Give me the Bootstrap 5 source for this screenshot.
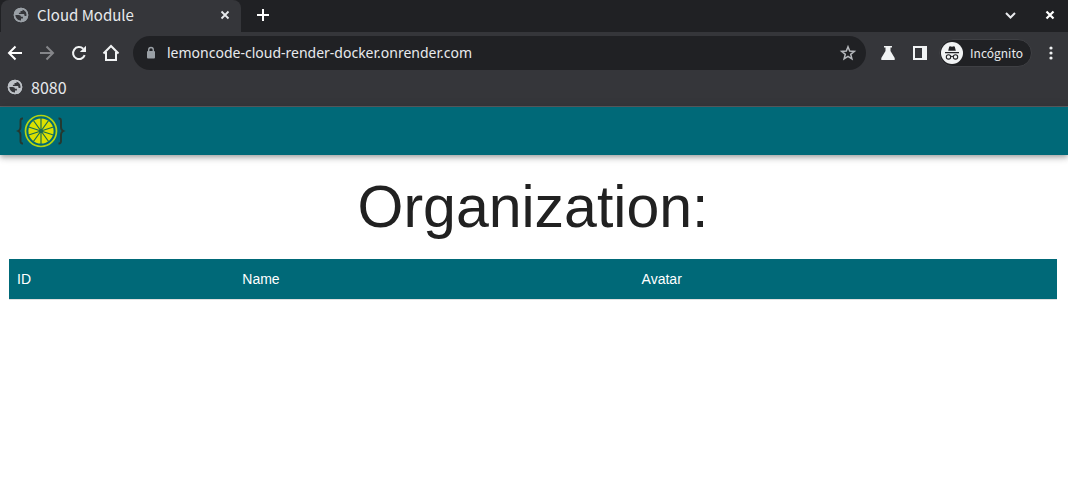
<!DOCTYPE html>
<html lang="es">
<head>
<meta charset="utf-8">
<meta name="viewport" content="width=device-width, initial-scale=1">
<title>Cloud Module</title>
<link href="https://cdn.jsdelivr.net/npm/bootstrap@5.3.0/dist/css/bootstrap.min.css" rel="stylesheet">
<style>
  body { font-family: "Liberation Sans", Arial, sans-serif; background: #fff; color: #212121; }
  svg { display: block; flex: none; }
  button { background: none; border: 0; padding: 0; color: inherit; }
  .browser { font-family: "Noto Sans CJK SC", "Noto Sans", sans-serif; line-height: 20px; color: #e8eaed; background: #35363a; border-bottom: 1px solid #5b5c60; }
  .tab-strip { height: 32px; background: #202124; padding-left: 1px; }
  .page-tab { width: 240px; height: 32px; background: #35363a; border-radius: 8px 8px 0 0; padding: 0 10px 2px 11px; font-size: 15px; }
  .page-tab .title { margin-left: 7px; }
  .new-tab { margin: 0 0 2px 14px; }
  .window-buttons { gap: 24px; padding: 0 10px 2px 0; }
  .toolbar { height: 42px; padding: 0 8px 0 6px; }
  .nav-buttons { gap: 14px; margin-right: 13px; }
  .address { height: 34px; border-radius: 17px; background: #202124; padding: 0 9px 0 10px; }
  .address input { background: none; border: 0; outline: 0; padding: 0 0 1px; margin-left: 8px; color: #e8eaed; font-family: "Noto Sans", sans-serif; font-size: 14px; min-width: 0; }
  .tools { gap: 14px; margin-left: 13px; }
  .incognito { height: 28px; border-radius: 14px; background: #202124; border: 1px solid #3f4044; padding: 0 8px 0 1px; gap: 7px; font-size: 12px; margin-left: -4px; }
  .menu-button { margin-left: -4px; }
  .bookmarks { height: 32px; padding: 0 6px 6px; font-size: 16px; }
  .bookmarks a { color: #e8eaed; gap: 7px; }
  .app-bar { height: 48px; padding: 0 16px; background: #006978; box-shadow: 0 2px 4px -1px rgba(0,0,0,.2), 0 4px 5px 0 rgba(0,0,0,.14), 0 1px 10px 0 rgba(0,0,0,.12); }
  main { padding: 16px 11px 0 9px; }
  h1 { font-size: 59px; line-height: 72px; margin: 0 0 16px; }
  .org-table { --bs-table-bg: #006978; --bs-table-color: #fff; table-layout: fixed; font-size: 14px; line-height: 24px; border-color: #e0e0e0; }
  .org-table th { padding: 8px; font-weight: 400; }
  .col-id { width: 21.5%; }
  .col-name { width: 38.1%; }
</style>
</head>
<body>
<svg width="0" height="0" class="position-absolute" aria-hidden="true">
  <symbol id="globe" viewBox="0 0 18 18">
    <circle cx="9" cy="9" r="7.300" fill="currentColor"/>
    <path d="M3 9 6.500 9c1.800 0 2.400.8 2.400 1.700h2v1.700H9v2.300C5.500 15 3 12.300 3 9zM10.500 3.200V5H8.500v1.700H6.900v1.300h4.300c.8 0 1.300.5 1.300 1.200v.8h2.100c.8-3-1-6-4.100-6.800z" fill="#35363a"/>
    <circle cx="9" cy="9" r="6.500" fill="none" stroke="currentColor" stroke-width="1.600"/>
  </symbol>
</svg>

<header class="browser">
  <div class="tab-strip d-flex align-items-center">
    <div class="page-tab d-flex align-items-center">
      <svg width="18" height="18" color="#9aa0a6"><use href="#globe"/></svg>
      <span class="title flex-grow-1">Cloud Module</span>
      <button type="button" aria-label="Cerrar pestaña"><svg width="12" height="12" viewBox="0 0 12 12" fill="none" stroke="currentColor" stroke-width="1.800"><path d="m2.500 2.500 7 7m0-7-7 7"/></svg></button>
    </div>
    <button type="button" class="new-tab" aria-label="Nueva pestaña"><svg width="16" height="16" viewBox="0 0 16 16" fill="none" stroke="#fff" stroke-width="2"><path d="M8 2v12M2 8h12"/></svg></button>
    <div class="window-buttons ms-auto d-flex">
      <button type="button" aria-label="Buscar pestañas"><svg width="16" height="16" viewBox="0 0 16 16" fill="none" stroke="currentColor" stroke-width="2"><path d="m4 6 4.500 4.500L13 6"/></svg></button>
      <button type="button" aria-label="Cerrar"><svg width="16" height="16" viewBox="0 0 16 16" fill="none" stroke="#fff" stroke-width="2.200"><path d="m4.500 4.500 7 7m0-7-7 7"/></svg></button>
    </div>
  </div>

  <div class="toolbar d-flex align-items-center">
    <div class="nav-buttons d-flex">
      <button type="button" aria-label="Atrás"><svg width="18" height="18" viewBox="0 0 18 18" fill="none" stroke="#fff" stroke-width="2"><path d="M16 9H3m6.500-6.500L3 9l6.500 6.500"/></svg></button>
      <button type="button" aria-label="Adelante"><svg width="18" height="18" viewBox="0 0 18 18" fill="none" stroke="#85868a" stroke-width="2"><path d="M2 9h13M8.500 2.500 15 9l-6.500 6.500"/></svg></button>
      <button type="button" aria-label="Recargar"><svg width="18" height="18" viewBox="0 0 18 18"><path d="M14.700 11.200A6 6 0 1 1 13.200 4.700" fill="none" stroke="#f1f3f4" stroke-width="2"/><path d="M16 1.800V8H9.800z" fill="#f1f3f4"/></svg></button>
      <button type="button" aria-label="Inicio"><svg width="18" height="18" viewBox="0 0 18 18" fill="none" stroke="#f1f3f4" stroke-width="2"><path d="M1.500 9.500 9 2l7.500 7.500M4 8v8h10V8"/></svg></button>
    </div>
    <div class="address flex-grow-1 d-flex align-items-center">
      <svg width="16" height="16" viewBox="0 0 16 16"><rect x="4" y="6" width="8" height="7.500" rx="1" fill="#9aa0a6"/><path d="M5.700 6.500V4.800a2.300 2.300 0 0 1 4.600 0v1.700" fill="none" stroke="#9aa0a6" stroke-width="1.400"/></svg>
      <input type="text" class="flex-grow-1" aria-label="Dirección" value="lemoncode-cloud-render-docker.onrender.com">
      <button type="button" aria-label="Añadir a marcadores"><svg width="18" height="18" viewBox="0 0 18 18" fill="none" stroke="#b5b8bc" stroke-width="1.500"><path d="m9 2.800 1.700 4.300 4.600.3-3.600 2.900 1.200 4.500L9 12.300l-3.900 2.500 1.200-4.500-3.600-2.900 4.600-.3z"/></svg></button>
    </div>
    <div class="tools d-flex align-items-center">
      <button type="button" aria-label="Experimentos"><svg width="18" height="18" viewBox="0 0 18 18" fill="#f1f3f4"><path d="M5 2h8v1.600h-1.500V7l4.200 7v2H2.300v-2l4.200-7V3.600H5z"/></svg></button>
      <button type="button" aria-label="Panel lateral"><svg width="18" height="18" viewBox="0 0 18 18" fill="#f1f3f4"><path fill-rule="evenodd" d="M2 2h14v14H2zM4 4v10h7V4z"/></svg></button>
      <button type="button" class="incognito d-flex align-items-center">
        <svg width="22" height="22" viewBox="0 0 22 22"><circle cx="11" cy="11" r="11" fill="#f1f3f4"/><path d="m7.200 8.800 1-4 .8-.5 2 .5 2-.5.8.5 1 4z" fill="#202124"/><path d="M4 10.600h14M9.800 14.600q1.200-.8 2.400 0" fill="none" stroke="#202124" stroke-width="1.100"/><g fill="none" stroke="#202124" stroke-width="1.100"><circle cx="7.500" cy="14.900" r="2.200"/><circle cx="14.500" cy="14.900" r="2.200"/></g></svg>
        <span>Incógnito</span>
      </button>
      <button type="button" class="menu-button" aria-label="Menú"><svg width="18" height="18" viewBox="0 0 18 18" fill="#f1f3f4"><circle cx="9" cy="4" r="1.600"/><circle cx="9" cy="9" r="1.600"/><circle cx="9" cy="14" r="1.600"/></svg></button>
    </div>
  </div>

  <nav class="bookmarks d-flex align-items-center" aria-label="Marcadores">
    <a href="#" class="d-flex align-items-center text-decoration-none"><svg width="18" height="18" color="#bdc1c6"><use href="#globe"/></svg>8080</a>
  </nav>
</header>

<div class="app-bar d-flex align-items-center">
  <a href="#" aria-label="Lemoncode">
    <svg width="50" height="36" viewBox="0 0 50 36">
      <g fill="none" stroke="#25382f" stroke-width="1.900"><path d="M7 5.500H6.500Q4.500 5.500 4.500 8v6q0 3-2.300 4 2.300 1 2.300 4v6q0 2.500 2 2.500H7M42.500 5.500h.5q2 0 2 2.500v6q0 3 2.300 4-2.300 1-2.300 4v6q0 2.500-2 2.500h-.5"/></g>
      <circle cx="25" cy="18" r="15.500" fill="none" stroke="#b5d610" stroke-width="1.700"/>
      <circle cx="25" cy="18" r="12.600" fill="#dbe000"/>
      <path d="M25 5v26M17.400 7.500l15.200 21M12.600 14l24.800 8M12.600 22l24.800-8M17.400 28.500l15.200-21" stroke="#176d55" stroke-width="1.200"/>
      <circle cx="25" cy="18" r="1.700" fill="#176d55"/>
    </svg>
  </a>
</div>

<main>
  <h1 class="text-center fw-normal">Organization:</h1>
  <table class="table org-table mb-0">
    <colgroup><col class="col-id"><col class="col-name"><col></colgroup>
    <thead><tr><th scope="col">ID</th><th scope="col">Name</th><th scope="col">Avatar</th></tr></thead>
    <tbody></tbody>
  </table>
</main>
<script src="https://cdn.jsdelivr.net/npm/bootstrap@5.3.0/dist/js/bootstrap.bundle.min.js"></script>
</body>
</html>
